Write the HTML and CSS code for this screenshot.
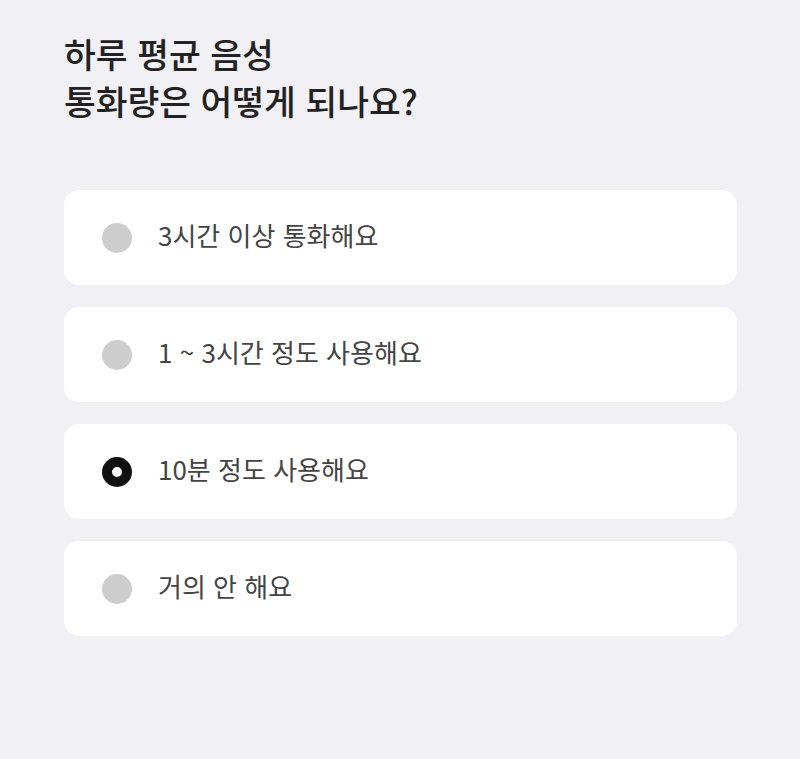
FILE: index.html
```html
<!DOCTYPE html>
<html lang="ko">

<head>
    <meta charset="UTF-8">
    <meta name="viewport" content="width=device-width, initial-scale=1.0">
    <title>음성 통화량</title>
    <link rel="stylesheet" href="styles.css">
</head>

<body>
    <div class="survey">
        <h1 class="question">하루 평균 음성<br>통화량은 어떻게 되나요?</h1>

        <div class="options">
            <label class="option">
                <span class="radio"></span>
                <span class="option-text">3시간 이상 통화해요</span>
            </label>
            <label class="option">
                <span class="radio"></span>
                <span class="option-text">1 ~ 3시간 정도 사용해요</span>
            </label>
            <label class="option">
                <span class="radio checked"></span>
                <span class="option-text">10분 정도 사용해요</span>
            </label>
            <label class="option">
                <span class="radio"></span>
                <span class="option-text">거의 안 해요</span>
            </label>
        </div>
    </div>
</body>

</html>
```

FILE: styles.css
```css
body {
    margin: 0;
    min-height: 100vh;
    background-color: #f1f0f5;
    font-family: "Noto Sans CJK KR", "Noto Sans", sans-serif;
}

.survey {
    padding: 30px 63px 0 64px;
}

.question {
    margin: 0;
    font-size: 34.5px;
    font-weight: 500;
    line-height: 47px;
    color: #222;
}

.options {
    display: flex;
    flex-direction: column;
    gap: 22px;
    margin-top: 66px;
}

.option {
    display: flex;
    align-items: center;
    height: 95px;
    padding-left: 38px;
    background-color: #fff;
    border-radius: 15px;
    box-sizing: border-box;
}

.radio {
    width: 30px;
    height: 30px;
    border-radius: 50%;
    background-color: #cdcdcd;
    margin-right: 26px;
    box-sizing: border-box;
    flex-shrink: 0;
}

.radio.checked {
    background-color: #fff;
    border: 10px solid #111;
}

.option-text {
    font-size: 26px;
    color: #444;
    line-height: 1;
    padding-bottom: 5px;
}
```
